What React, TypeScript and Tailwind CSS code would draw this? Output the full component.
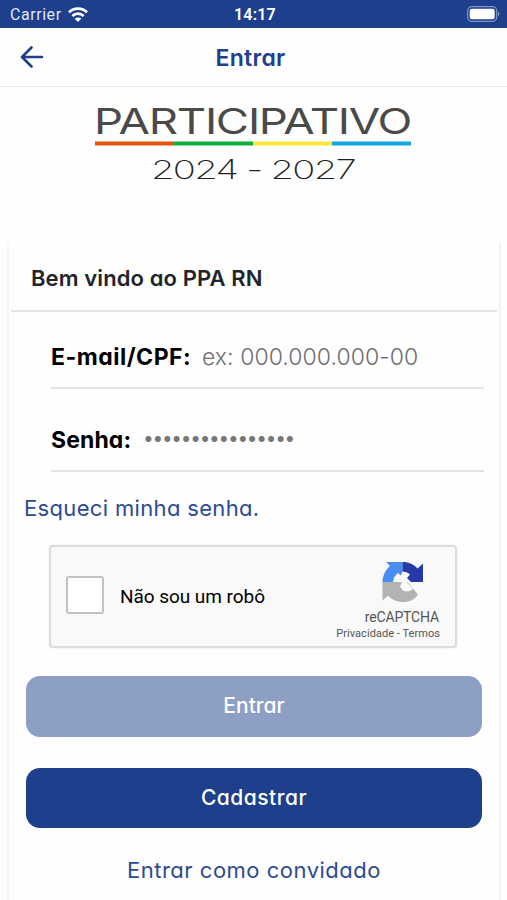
import { useState } from "react";

interface FieldProps {
  id: string;
  label: string;
  type: string;
  placeholder: string;
  value: string;
  onChange: (e: React.ChangeEvent<HTMLInputElement>) => void;
  labelClass: string;
  inputClass: string;
}

function StatusBar() {
  return (
    <div className="flex h-7 items-center justify-between bg-[#1e3f8b] pr-[7px] pl-[10px] font-['Roboto',sans-serif] text-white">
      <div className="flex w-40 items-center gap-[6px]">
        <span className="pt-0.5 text-[16px] leading-5 tracking-[0.55px] text-[#dfe6f6]">Carrier</span>
        <svg width="20" height="15" viewBox="0 0 20 15" fill="none" stroke="white" strokeWidth="2.7">
          <path d="M1 5.2C6 .3 14 .3 19 5.2" />
          <path d="M4.3 8.9c3.3-3.1 8.1-3.1 11.4 0" />
          <path d="M10 15 6.7 11.7c1.9-1.7 4.7-1.7 6.6 0Z" fill="white" stroke="none" />
        </svg>
      </div>
      <span className="pt-0.5 text-[16px] leading-5 font-semibold tracking-[0.2px]">14:17</span>
      <div className="flex w-40 justify-end">
        <svg width="33" height="16" viewBox="0 0 33 16" fill="none">
          <rect x=".7" y=".7" width="29" height="14.6" rx="4" stroke="#7f95c6" strokeWidth="1.2" />
          <rect x="2.7" y="2.7" width="25" height="10.6" rx="2.3" fill="white" />
          <path d="M31 5.6c1.8.8 1.8 4 0 4.8Z" fill="#7f95c6" />
        </svg>
      </div>
    </div>
  );
}

function Logo() {
  return (
    <svg className="mx-auto block" width="340" height="100" viewBox="0 -12 340 100">
      <text x="10" y="31.5" fontSize="36" fontWeight="400" fill="#4a4a4a" letterSpacing="-1" textLength="317" lengthAdjust="spacingAndGlyphs">
        PARTICIPATIVO
      </text>
      <text x="67" y="77" fontSize="26.5" fontWeight="200" fill="#222222" letterSpacing="-1.2" textLength="204" lengthAdjust="spacingAndGlyphs">
        2024 - 2027
      </text>
      <path d="M11 41.5h79" stroke="#e2530f" strokeWidth="4" />
      <path d="M90 41.5h79" stroke="#0fae3c" strokeWidth="4" />
      <path d="M169 41.5h79" stroke="#fbe83c" strokeWidth="4" />
      <path d="M248 41.5h79" stroke="#13a6dc" strokeWidth="4" />
    </svg>
  );
}

function Field({ id, label, type, placeholder, value, onChange, labelClass, inputClass }: FieldProps) {
  return (
    <div className="flex h-[63px] items-center border-b-2 border-[#e4e4e4]">
      <label htmlFor={id} className={`shrink-0 pt-0.5 text-[23px] font-bold text-black ${labelClass}`}>
        {label}
      </label>
      <input
        id={id}
        type={type}
        placeholder={placeholder}
        value={value}
        onChange={onChange}
        className={`min-w-0 flex-1 bg-transparent outline-none ${inputClass}`}
      />
    </div>
  );
}

function RecaptchaLogo() {
  return (
    <svg width="42" height="42" viewBox="0 0 42 42">
      <path d="M4 1h16.5v20H.5C.7 14.500 3.500 9 8 5Z" fill="#4a8df0" />
      <path d="M20.500 1C27 1 32 3.500 35.500 7.500L41 2.500V21H20.500Z" fill="#2539a8" />
      <path d="M.5 21h25l10.500 12.500C33 38.500 27.500 41 21 41 14.500 41 9.500 38.500 6 34.500L.5 39.500Z" fill="#b3b3b3" />
      <path d="M12 16.500 15.500 12l3.500 2.500 1.500-4c2.500 0 5.500 1 7.500 3l-3 3.500 4 4h-4.500l6.500 7c-2.500 2.500-7 3.200-10 1.500L18 25.500l2-4.500h-9Z" fill="#f9f9f9" />
    </svg>
  );
}

export default function App() {
  const [email, setEmail] = useState("");
  const [password, setPassword] = useState("");
  const [checked, setChecked] = useState(false);

  return (
    <div className="flex h-[900px] w-full flex-col overflow-hidden bg-[#fefefe] font-['Inter','Liberation_Sans',sans-serif] [font-feature-settings:'cv11']">
      <StatusBar />

      <header className="grid h-[59px] grid-cols-[1fr_auto_1fr] items-center border-b border-[#e6e6e6] pr-[26px] pl-5">
        <button type="button" aria-label="Voltar" className="w-6">
          <svg width="24" height="22" viewBox="0 0 24 22" fill="none" stroke="#1e3f8b" strokeWidth="2.6" strokeLinecap="round" strokeLinejoin="round">
            <path d="M11.5 1.5 2 11l9.500 9.500M2.500 11h19.500" />
          </svg>
        </button>
        <h1 className="pt-px text-[23px] leading-7 font-semibold tracking-[0.3px] text-[#1e3f8b]">Entrar</h1>
      </header>

      <div className="h-[156px] pt-[3px]">
        <Logo />
      </div>

      <main className="mr-[6px] ml-[7px] flex-1 border-x-2 border-[#f4f4f4]">
        <div className="mr-[2px] ml-[2px] flex h-[69px] items-center border-b-2 border-[#e2e4e6] pt-[3px] pl-5">
          <h2 className="text-[22px] font-semibold tracking-[0.1px] text-[#212529]">Bem vindo ao PPA RN</h2>
        </div>

        <div className="mr-[15px] ml-[42px] flex flex-col gap-5 pt-[14px]">
          <Field
            id="email"
            label="E-mail/CPF:"
            type="text"
            placeholder="ex: 000.000.000-00"
            value={email}
            onChange={(e) => setEmail(e.target.value)}
            labelClass="w-[151px] tracking-[0.5px]"
            inputClass="pt-0.5 text-[23px] font-light tracking-[0.05px] placeholder:text-[#707070]"
          />
          <Field
            id="senha"
            label="Senha:"
            type="password"
            placeholder="••••••••••••••••"
            value={password}
            onChange={(e) => setPassword(e.target.value)}
            labelClass="w-[92px] tracking-[0.1px]"
            inputClass="text-[19px] tracking-[-1.25px] placeholder:text-[#777777]"
          />
        </div>

        <a href="#" className="mt-[20px] ml-[15px] block w-fit text-[22px] leading-8 tracking-[0.34px] text-[#2c4b93]">
          Esqueci minha senha.
        </a>

        <div className="mt-[21px] ml-10 flex h-[103px] w-[408px] items-center rounded-[4px] border-2 border-[#dcdcdc] bg-[#f9f9f9] pl-[15px] font-['Roboto',sans-serif] shadow-[0_0_3px_rgba(0,0,0,0.08)]">
          <button
            type="button"
            role="checkbox"
            aria-checked={checked}
            aria-label="Não sou um robô"
            onClick={() => setChecked(!checked)}
            className="mb-1 size-[38px] shrink-0 rounded-[3px] border-2 border-[#c1c1c1] bg-white"
          />
          <span className="ml-4 flex-1 pt-px text-[19px] tracking-[-0.05px] text-black">Não sou um robô</span>
          <div className="mr-[15px] flex flex-col items-end pt-[9px] text-[#555555]">
            <div className="mr-4">
              <RecaptchaLogo />
            </div>
            <span className="mt-[5px] mr-px text-[14px] leading-[18px] tracking-[-0.15px]">reCAPTCHA</span>
            <span className="text-[11px] leading-4 tracking-[0.05px]">Privacidade - Termos</span>
          </div>
        </div>

        <div className="mr-[17px] ml-[17px] flex flex-col pt-[28px]">
          <button type="button" className="h-[61px] rounded-[14px] bg-[#8e9fc6] pb-px text-[21px] font-medium text-white">
            Entrar
          </button>
          <button type="button" className="mt-[31px] h-[60px] rounded-[14px] bg-[#1e3f8b] pb-px text-[21px] font-medium tracking-[0.5px] text-white">
            Cadastrar
          </button>
          <a href="#" className="mt-[26px] block text-center text-[22px] leading-8 tracking-[0.5px] text-[#2c4b93]">
            Entrar como convidado
          </a>
        </div>
      </main>
    </div>
  );
}
